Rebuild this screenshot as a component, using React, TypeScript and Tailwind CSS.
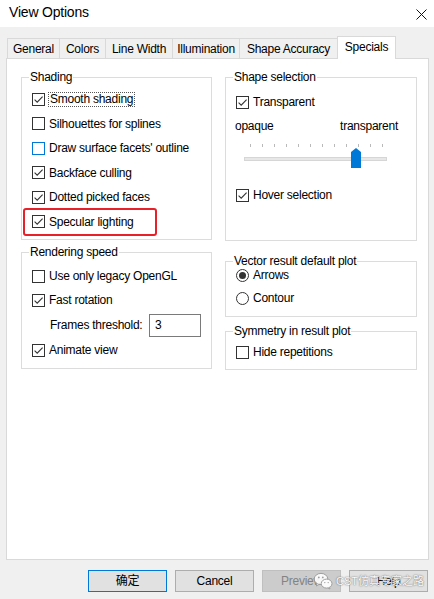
import type { ReactNode } from 'react';

const tabs = [
    { label: 'General', cls: 'w-[52px]' },
    { label: 'Colors', cls: 'w-[46px]' },
    { label: 'Line Width', cls: 'w-[67px]' },
    { label: 'Illumination', cls: 'w-[67px]' },
    { label: 'Shape Accuracy', cls: 'w-[98px]' },
];

function CheckBox({ checked, hover }: { checked?: boolean; hover?: boolean }) {
    return (
        <span
            className={`flex h-[13px] w-[13px] shrink-0 items-center justify-center border bg-white ${
                hover ? 'border-[#0078d7]' : 'border-[#333333]'
            }`}
        >
            {checked && (
                <svg width="11" height="11" viewBox="0 0 11 11">
                    <path d="M1.6 5.6 L4.2 8.2 L9.6 2.6" fill="none" stroke="#333" strokeWidth="1.1" />
                </svg>
            )}
        </span>
    );
}

function Radio({ checked }: { checked?: boolean }) {
    return (
        <span className="flex h-[13px] w-[13px] shrink-0 items-center justify-center rounded-full border border-[#333333] bg-white">
            {checked && <span className="h-[7px] w-[7px] rounded-full bg-[#333333]" />}
        </span>
    );
}

interface RowProps {
    label: string;
    checked?: boolean;
    hover?: boolean;
    focus?: boolean;
    className?: string;
    children?: ReactNode;
}

function CheckRow({ label, checked, hover, focus, className = 'h-[24px]', children }: RowProps) {
    return (
        <div className={`relative flex items-center ${className}`}>
            <CheckBox checked={checked} hover={hover} />
            {focus ? (
                <span className="ml-[3px] border border-dotted border-[#555] px-px leading-[13px]">{label}</span>
            ) : (
                <span className="ml-[4px]">{label}</span>
            )}
            {children}
        </div>
    );
}

function Group({ title, className, children }: { title: string; className?: string; children: ReactNode }) {
    return (
        <fieldset className={`border border-[#dcdcdc] pl-[10px] ${className ?? ''}`}>
            <legend className="-ml-[3px] px-px leading-[14px]">{title}</legend>
            {children}
        </fieldset>
    );
}

function Slider() {
    const ticks = Array.from({ length: 12 }, (_, i) => 14 + i * 12);
    return (
        <svg width="170" height="26" viewBox="0 0 170 26" className="mt-[10px] block">
            {ticks.map(x => (
                <line key={x} x1={x + 0.5} y1="1" x2={x + 0.5} y2="4" stroke="#b9b9b9" strokeWidth="1" />
            ))}
            <rect x="8.5" y="14.5" width="142" height="3" fill="#e7e7e7" stroke="#d6d6d6" />
            <path d="M115 9 L120 5 L125 9 L125 25 L115 25 Z" fill="#0078d7" />
        </svg>
    );
}

function Button({ label, primary, disabled }: { label: string; primary?: boolean; disabled?: boolean }) {
    return (
        <div
            className={`flex h-[22px] w-[79px] items-center justify-center border ${
                primary
                    ? 'border-[#0078d7] bg-[#e1e1e1] text-black'
                    : disabled
                      ? 'border-[#bfbfbf] bg-[#cccccc] text-[#838383]'
                      : 'border-[#adadad] bg-[#e1e1e1] text-black'
            }`}
        >
            {label}
        </div>
    );
}

function WeChatIcon() {
    return (
        <svg width="20" height="18" viewBox="0 0 20 18">
            <ellipse cx="8" cy="7" rx="6.8" ry="5.6" fill="white" stroke="#9a9a9a" strokeWidth="1" />
            <path d="M4 11.5 L3.4 14 L6.2 12.3" fill="white" stroke="#9a9a9a" strokeWidth="1" />
            <ellipse cx="13.6" cy="11.6" rx="5.4" ry="4.5" fill="white" stroke="#9a9a9a" strokeWidth="1" />
            <path d="M16.4 15.3 L17 17 L15 16" fill="white" stroke="#9a9a9a" strokeWidth="1" />
            <circle cx="5.8" cy="5.4" r="0.9" fill="#9a9a9a" />
            <circle cx="9.8" cy="5.4" r="0.9" fill="#9a9a9a" />
            <circle cx="11.8" cy="10.6" r="0.7" fill="#9a9a9a" />
            <circle cx="15.2" cy="10.6" r="0.7" fill="#9a9a9a" />
        </svg>
    );
}

export default function App() {
    return (
        <div className="relative h-[599px] w-[434px] overflow-hidden bg-[#f0f0f0] font-['Liberation_Sans','Noto_Sans_CJK_SC',sans-serif] text-[12px] tracking-[-0.25px] text-black">
            {/* title bar */}
            <div className="flex h-[27px] items-center justify-between bg-white pb-[3px] pl-[9px] pr-[7px]">
                <span className="text-[14px] tracking-[-0.2px]">View Options</span>
                <svg width="11" height="11" viewBox="0 0 11 11" className="mt-[4px]">
                    <path d="M0.5 0.5 L10.5 10.5 M10.5 0.5 L0.5 10.5" stroke="#111" strokeWidth="1" />
                </svg>
            </div>

            {/* tabs */}
            <div className="relative z-10 -mb-px mt-[9px] flex h-[23px] items-end pl-[7px]">
                {tabs.map(t => (
                    <div
                        key={t.label}
                        className={`flex h-[21px] items-center justify-center border-b border-l border-t border-[#d9d9d9] bg-[#f0f0f0] ${t.cls}`}
                    >
                        {t.label}
                    </div>
                ))}
                <div className="flex h-[23px] w-[59px] items-center justify-center border-x border-t border-[#d9d9d9] bg-white pb-[3px]">
                    Specials
                </div>
            </div>

            {/* panel */}
            <div className="ml-[6px] flex h-[502px] w-[423px] gap-[13px] border border-[#d9d9d9] bg-white pl-[14px] pt-[11px]">
                <div className="flex w-[191px] flex-col">
                    <Group title="Shading" className="pb-[5px] pt-[3px]">
                        <CheckRow label="Smooth shading" checked focus className="h-[24.5px]" />
                        <CheckRow label="Silhouettes for splines" className="h-[24.5px]" />
                        <CheckRow label="Draw surface facets' outline" hover className="h-[24.5px]" />
                        <CheckRow label="Backface culling" checked className="h-[24.5px]" />
                        <CheckRow label="Dotted picked faces" checked className="h-[24.5px]" />
                        <CheckRow label="Specular lighting" checked className="h-[24.5px]">
                            <span className="absolute -left-[9px] -top-[1.5px] h-[28px] w-[134px] rounded-[3px] border-2 border-[#e8202a]" />
                        </CheckRow>
                    </Group>
                    <Group title="Rendering speed" className="mt-[5px] pb-[6px] pt-[5px]">
                        <CheckRow label="Use only legacy OpenGL" />
                        <CheckRow label="Fast rotation" checked />
                        <div className="flex h-[26px] items-center pl-[18px]">
                            <span className="w-[99px]">Frames threshold:</span>
                            <div className="flex h-[23px] w-[52px] items-center border border-[#7a7a7a] bg-white pl-[5px]">3</div>
                        </div>
                        <CheckRow label="Animate view" checked />
                    </Group>
                </div>

                <div className="flex w-[192px] flex-col">
                    <Group title="Shape selection" className="pb-[33px] pt-[6px]">
                        <CheckRow label="Transparent" checked />
                        <div className="mt-[5px] flex h-[14px] items-center justify-between pr-[18px] leading-[14px]">
                            <span className="-ml-px">opaque</span>
                            <span>transparent</span>
                        </div>
                        <Slider />
                        <CheckRow label="Hover selection" checked className="mt-[14px] h-[24px]" />
                    </Group>
                    <Group title="Vector result default plot" className="mt-[13px] pb-[11px]">
                        <div className="flex h-[14px] items-center">
                            <Radio checked />
                            <span className="ml-[4px]">Arrows</span>
                        </div>
                        <div className="mt-[9px] flex h-[14px] items-center">
                            <Radio />
                            <span className="ml-[4px]">Contour</span>
                        </div>
                    </Group>
                    <Group title="Symmetry in result plot" className="mt-[7px] pb-[9px] pt-[6px]">
                        <CheckRow label="Hide repetitions" className="h-[16px]" />
                    </Group>
                </div>
            </div>

            {/* buttons */}
            <div className="flex justify-end gap-[8px] pr-[6px] pt-[10px]">
                <Button label="确定" primary />
                <Button label="Cancel" />
                <Button label="Preview" disabled />
                <Button label="Help" />
            </div>

            {/* watermark */}
            <div className="absolute left-[313px] top-[572px] flex items-center gap-[3px] opacity-90">
                <WeChatIcon />
                <span className="text-[11px] tracking-normal text-white [text-shadow:0_0_1px_#666,0_0_2px_#888]">
                    CST仿真专家之路
                </span>
            </div>
        </div>
    );
}
